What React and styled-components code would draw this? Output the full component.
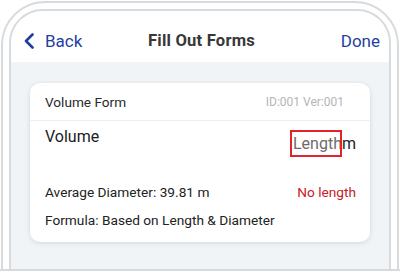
import React from "react";
import styled, { createGlobalStyle } from "styled-components";

const Global = createGlobalStyle`
  html, body { margin: 0; padding: 0; background: #ffffff; }
  body { font-family: Roboto, "Liberation Sans", sans-serif; }
  * { box-sizing: border-box; }
`;

const Viewport = styled.div`
  height: 271px;
  overflow: hidden;
  border-bottom: 2px solid #d6dadc;
`;

const Device = styled.div`
  margin: 1px 0 0 1px;
  width: 398px;
  height: 340px;
  border: 2px solid #d6dadc;
  border-radius: 44px;
  padding: 6px;
  background: #ffffff;
`;

const Screen = styled.div`
  height: 100%;
  border: 2px solid #d6dadc;
  border-radius: 34px;
  overflow: hidden;
  background: #f1f4f7;
  display: flex;
  flex-direction: column;
`;

const Header = styled.header`
  height: 51px;
  flex: none;
  background: #ffffff;
  display: grid;
  grid-template-columns: 1fr auto 1fr;
  align-items: center;
  padding: 8px 9px 0 12px;
`;

const NavButton = styled.button`
  border: none;
  background: none;
  padding: 0;
  display: flex;
  align-items: center;
  justify-self: ${(p) => (p.$end ? "end" : "start")};
  gap: 10px;
  color: #1f3f9f;
  font-family: Roboto, "Liberation Sans", sans-serif;
  font-size: 17px;
  letter-spacing: 0;
  cursor: pointer;
`;

const Title = styled.h1`
  margin: 0;
  font-size: 16.6px;
  font-weight: 700;
  color: #383838;
  letter-spacing: 0.2px;
`;

const Content = styled.main`
  flex: 1;
  padding: 21px 19px 0;
`;

const Card = styled.section`
  background: #ffffff;
  border-radius: 10px;
  box-shadow: 0 1px 5px rgba(0, 0, 0, 0.12);
  height: 159px;
  display: flex;
  flex-direction: column;
`;

const CardHeader = styled.div`
  height: 38px;
  display: flex;
  align-items: center;
  justify-content: space-between;
  padding: 0 26px 0 15px;
  border-bottom: 1px solid #eeeff1;
`;

const CardTitle = styled.span`
  font-size: 13.6px;
  color: #2a2a2a;
`;

const Meta = styled.span`
  font-size: 12px;
  color: #b5b5b5;
`;

const CardBody = styled.div`
  padding: 6px 14px 0 15px;
  display: flex;
  flex-direction: column;
`;

const Row = styled.div`
  display: flex;
  justify-content: space-between;
  align-items: ${(p) => p.$align || "center"};
  height: ${(p) => p.$h}px;
`;

const FieldLabel = styled.span`
  font-size: 16px;
  color: #1c1c1c;
`;

const InputWrap = styled.div`
  display: flex;
  align-items: center;
  margin-top: 3px;
  font-size: 16px;
  color: #1c1c1c;
`;

const LengthInput = styled.input`
  width: 52px;
  height: 27px;
  border: 2px solid #e0232d;
  padding: 0 0 0 1px;
  font-family: Roboto, "Liberation Sans", sans-serif;
  font-size: 16px;
  outline: none;
  &::placeholder { color: #6b6b6b; }
`;

const Info = styled.span`
  font-size: 13.7px;
  color: #222222;
`;

const Warning = styled.span`
  font-size: 13.7px;
  color: #c62026;
`;

function Chevron() {
  return (
    <svg width="12" height="16" viewBox="0 0 12 16">
      <polyline
        points="9.5,1.5 3,8 9.5,14.5"
        fill="none"
        stroke="#1f3f9f"
        strokeWidth="2.6"
        strokeLinecap="round"
        strokeLinejoin="round"
      />
    </svg>
  );
}

export default function App() {
  return (
    <>
      <Global />
      <Viewport>
        <Device>
          <Screen>
            <Header>
              <NavButton>
                <Chevron />
                Back
              </NavButton>
              <Title>Fill Out Forms</Title>
              <NavButton $end>Done</NavButton>
            </Header>
            <Content>
              <Card>
                <CardHeader>
                  <CardTitle>Volume Form</CardTitle>
                  <Meta>ID:001 Ver:001</Meta>
                </CardHeader>
                <CardBody>
                  <Row $h={52} $align="flex-start">
                    <FieldLabel>Volume</FieldLabel>
                    <InputWrap>
                      <LengthInput placeholder="Length" />
                      m
                    </InputWrap>
                  </Row>
                  <Row $h={26}>
                    <Info>Average Diameter: 39.81 m</Info>
                    <Warning>No length</Warning>
                  </Row>
                  <Row $h={30}>
                    <Info>Formula: Based on Length &amp; Diameter</Info>
                  </Row>
                </CardBody>
              </Card>
            </Content>
          </Screen>
        </Device>
      </Viewport>
    </>
  );
}
